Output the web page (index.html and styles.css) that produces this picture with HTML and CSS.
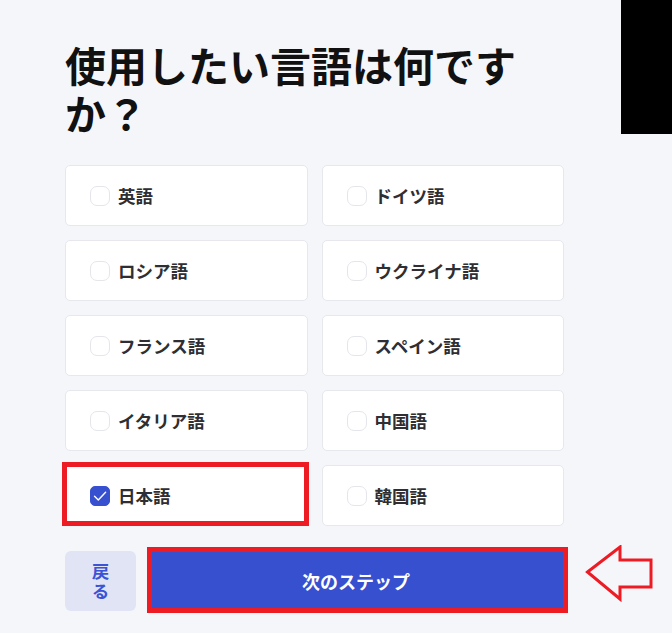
FILE: index.html
```html
<!DOCTYPE html>
<html lang="ja">
<head>
<meta charset="utf-8">
<link rel="stylesheet" href="styles.css">
</head>
<body>
<div class="black-box"></div>
<main class="page">
  <h1 class="title">使用したい言語は何ですか？</h1>
  <div class="grid">
    <label class="card"><span class="box"></span><span class="label">英語</span></label>
    <label class="card"><span class="box"></span><span class="label">ドイツ語</span></label>
    <label class="card"><span class="box"></span><span class="label">ロシア語</span></label>
    <label class="card"><span class="box"></span><span class="label">ウクライナ語</span></label>
    <label class="card"><span class="box"></span><span class="label">フランス語</span></label>
    <label class="card"><span class="box"></span><span class="label">スペイン語</span></label>
    <label class="card"><span class="box"></span><span class="label">イタリア語</span></label>
    <label class="card"><span class="box"></span><span class="label">中国語</span></label>
    <label class="card card-marked"><span class="box box-checked"><svg width="20" height="20" viewBox="0 0 20 20"><path d="M4.5 10.2 L8.3 14 L15.6 6.2" fill="none" stroke="#fff" stroke-width="1.4" stroke-linecap="round" stroke-linejoin="round"/></svg></span><span class="label">日本語</span><span class="mark mark-card"></span></label>
    <label class="card"><span class="box"></span><span class="label">韓国語</span></label>
  </div>
  <div class="actions">
    <button class="btn-back">戻る</button>
    <button class="btn-next">次のステップ<span class="mark mark-btn"></span></button>
  </div>
</main>
<svg class="arrow" width="72" height="60" viewBox="0 0 72 60"><polygon points="3.5,27 36,2 36,15 67,15 67,42 36,42 36,54" fill="none" stroke="#ed1c24" stroke-width="3" stroke-linejoin="miter"/></svg>
</body>
</html>
```

FILE: styles.css
```css
html, body {
  margin: 0;
  padding: 0;
  background: #f5f6fa;
}
body {
  width: 672px;
  height: 633px;
  position: relative;
  overflow: hidden;
  font-family: "Noto Sans CJK JP", "Noto Sans", sans-serif;
}
.black-box {
  position: absolute;
  top: 0;
  right: 0;
  width: 51px;
  height: 134px;
  background: #000;
}
.page {
  padding: 40px 0 0 65px;
  width: 499px;
}
.title {
  margin: 0;
  max-width: 480px;
  font-size: 41px;
  line-height: 48px;
  font-weight: 700;
  color: #111;
}
.grid {
  margin-top: 29px;
  display: grid;
  grid-template-columns: 1fr 1fr;
  column-gap: 14px;
  row-gap: 14px;
}
.card {
  position: relative;
  box-sizing: border-box;
  height: 61px;
  background: #fff;
  border: 1px solid #e6e8ee;
  border-radius: 5px;
  padding: 0 24px;
  display: flex;
  align-items: center;
  gap: 8px;
}
.box {
  box-sizing: border-box;
  width: 20px;
  height: 20px;
  border: 1px solid #e4e6ec;
  border-radius: 7px;
  background: #fff;
  flex: none;
}
.box-checked {
  background: #3650d0;
  border-color: #3650d0;
  border-radius: 5px;
  position: relative;
}
.box-checked svg {
  position: absolute;
  left: -1px;
  top: -1px;
}
.label {
  font-size: 17.5px;
  font-weight: 700;
  color: #2e2e33;
  line-height: 20px;
}
.mark {
  position: absolute;
  border: 5px solid #ed1c24;
  pointer-events: none;
}
.mark-card {
  top: -4px;
  left: -4px;
  right: -2px;
  bottom: -1px;
}
.actions {
  margin-top: 25px;
  display: flex;
  gap: 12px;
}
.btn-back {
  width: 71px;
  height: 60px;
  border: none;
  border-radius: 6px;
  background: #e1e4f5;
  color: #3d52d5;
  font-family: inherit;
  font-size: 17.5px;
  font-weight: 700;
  line-height: 20px;
  padding: 0 24px;
}
.btn-next {
  position: relative;
  flex: 1;
  height: 60px;
  border: none;
  border-radius: 4px;
  background: #3650d0;
  color: #fff;
  font-family: inherit;
  font-size: 18px;
  font-weight: 700;
}
.mark-btn {
  top: -4px;
  left: -1px;
  right: -4px;
  bottom: -2px;
}
.arrow {
  position: absolute;
  left: 584px;
  top: 545px;
}
```
